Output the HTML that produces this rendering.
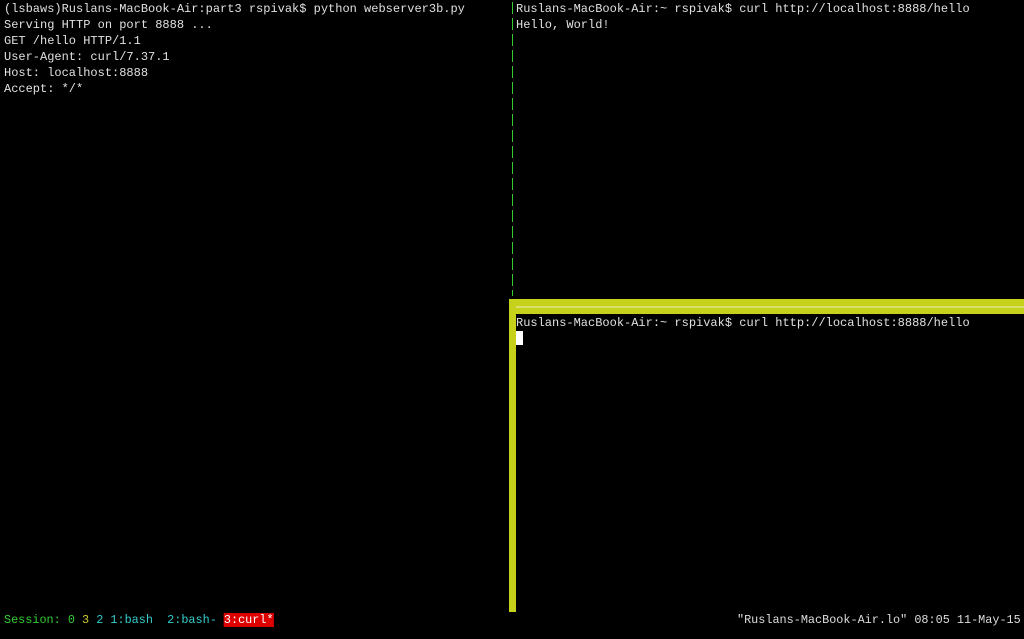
<!DOCTYPE html>
<html><head><style>
html,body{margin:0;padding:0;background:#000;width:1024px;height:639px;overflow:hidden;position:relative}
.t{position:absolute;font-family:"Liberation Mono",monospace;font-size:12px;line-height:16px;color:#e0e0e0;white-space:pre;margin:0}
.div{position:absolute;left:512px;top:2px;width:1px;height:294px;background:repeating-linear-gradient(#3c3 0 12px,transparent 12px 16px)}
.yb{position:absolute;background:#c5d11a}
.s{position:absolute;font-family:"Liberation Mono",monospace;font-size:12px;line-height:16px;white-space:pre;transform:scaleX(0.985);transform-origin:left}
</style></head><body>
<pre class="t" style="left:4px;top:1px">(lsbaws)Ruslans-MacBook-Air:part3 rspivak$ python webserver3b.py
Serving HTTP on port 8888 ...
GET /hello HTTP/1.1
User-Agent: curl/7.37.1
Host: localhost:8888
Accept: */*</pre>
<div class="div"></div>
<pre class="t" style="left:516px;top:1px">Ruslans-MacBook-Air:~ rspivak$ curl http://localhost:8888/hello
Hello, World!</pre>
<div class="yb" style="left:509px;top:299px;width:515px;height:15px"></div>
<div style="position:absolute;left:516px;top:306px;width:508px;height:2px;background:#d8e070"></div>
<div class="yb" style="left:509px;top:299px;width:7px;height:313px"></div>
<pre class="t" style="left:516px;top:315px">Ruslans-MacBook-Air:~ rspivak$ curl http://localhost:8888/hello</pre>
<div style="position:absolute;left:516px;top:331px;width:7px;height:14px;background:#fff"></div>
<div class="s" style="left:4px;top:612px"><span style="color:#3c3">Session: 0 </span><span style="color:#cc3">3</span><span style="color:#3cc"> 2 1:bash  2:bash- </span><span style="background:#d00;color:#fff">3:curl*</span></div>
<div class="s" style="left:737px;top:612px;color:#ddd">"Ruslans-MacBook-Air.lo" 08:05 11-May-15</div>
</body></html>
